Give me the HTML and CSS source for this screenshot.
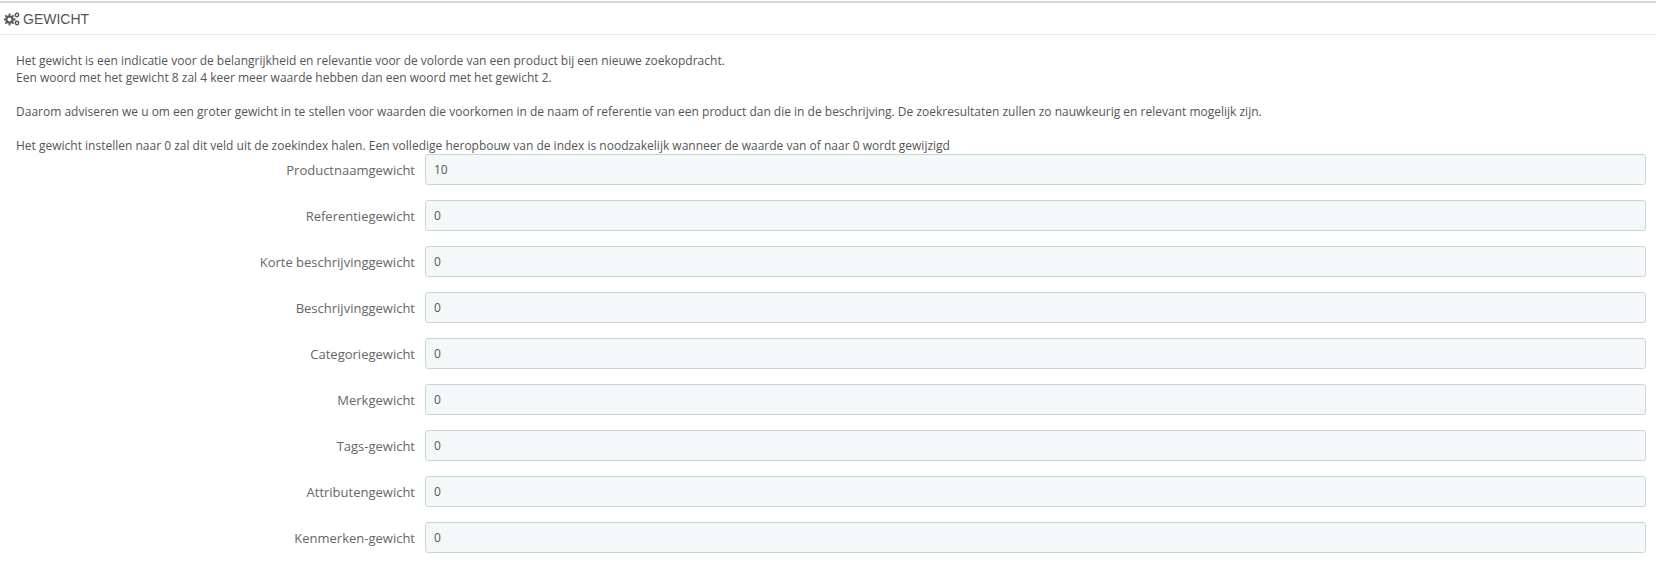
FILE: index.html
```html
<!DOCTYPE html>
<html lang="nl">
  <head>
    <meta charset="UTF-8" />
    <meta name="viewport" content="width=device-width, initial-scale=1.0" />
    <title>Gewicht</title>
    <link rel="stylesheet" href="styles.css">
  </head>
  <body>
    <section class="panel">
      <h3 class="panel-heading">
        <svg class="panel-icon" viewBox="0 0 16 14" width="16" height="14" aria-hidden="true">
          <g fill="none" stroke="#555">
            <circle cx="5.5" cy="7.5" r="3.2" stroke-width="2.2" />
            <path d="M5.5 1.5v2M5.5 11.5v2M-.5 7.5h2M9.5 7.5h2M1.3 3.3l1.4 1.4M8.3 10.3l1.4 1.4M1.3 11.7l1.4-1.4M8.3 4.700l1.4-1.4" stroke-width="1.8" />
            <circle cx="13" cy="3" r="1.700" stroke-width="1.400" />
            <circle cx="13" cy="11" r="1.700" stroke-width="1.400" />
          </g>
        </svg>
        Gewicht
      </h3>

      <div class="intro">
        <p>Het gewicht is een indicatie voor de belangrijkheid en relevantie voor de volorde van een product bij een nieuwe zoekopdracht.<br>Een woord met het gewicht 8 zal 4 keer meer waarde hebben dan een woord met het gewicht 2.</p>
        <p>Daarom adviseren we u om een groter gewicht in te stellen voor waarden die voorkomen in de naam of referentie van een product dan die in de beschrijving. De zoekresultaten zullen zo nauwkeurig en relevant mogelijk zijn.</p>
        <p>Het gewicht instellen naar 0 zal dit veld uit de zoekindex halen. Een volledige heropbouw van de index is noodzakelijk wanneer de waarde van of naar 0 wordt gewijzigd</p>
      </div>

      <form class="weights">
        <div class="form-row"><label for="w1">Productnaamgewicht</label><input id="w1" type="text" value="10"></div>
        <div class="form-row"><label for="w2">Referentiegewicht</label><input id="w2" type="text" value="0"></div>
        <div class="form-row"><label for="w3">Korte beschrijvinggewicht</label><input id="w3" type="text" value="0"></div>
        <div class="form-row"><label for="w4">Beschrijvinggewicht</label><input id="w4" type="text" value="0"></div>
        <div class="form-row"><label for="w5">Categoriegewicht</label><input id="w5" type="text" value="0"></div>
        <div class="form-row"><label for="w6">Merkgewicht</label><input id="w6" type="text" value="0"></div>
        <div class="form-row"><label for="w7">Tags-gewicht</label><input id="w7" type="text" value="0"></div>
        <div class="form-row"><label for="w8">Attributengewicht</label><input id="w8" type="text" value="0"></div>
        <div class="form-row"><label for="w9">Kenmerken-gewicht</label><input id="w9" type="text" value="0"></div>
      </form>
    </section>
  </body>
</html>
```

FILE: styles.css
```css
* {
  margin: 0;
  padding: 0;
  box-sizing: border-box;
}

body {
  background-color: white;
  font-family: "Open Sans", sans-serif;
  font-size: 12px;
  color: #555;
}

.panel {
  border-top: 2px solid #d3d8db;
  margin-top: 1px;
}

.panel-heading {
  display: flex;
  align-items: center;
  gap: 3px;
  height: 32px;
  padding-left: 4px;
  border-bottom: 1px solid #eee;
  font-family: "Liberation Sans Narrow", "Liberation Sans", sans-serif;
  font-size: 14px;
  font-weight: normal;
  text-transform: uppercase;
}

.panel-icon {
  flex-shrink: 0;
}

.intro {
  padding: 17px 16px 0;
  line-height: 17px;
}

.intro p {
  margin-bottom: 17px;
}

.intro p:last-child {
  margin-bottom: 0;
}

.weights {
  display: flex;
  flex-direction: column;
  gap: 15px;
  margin-top: 0;
}

.form-row {
  display: flex;
  align-items: center;
  gap: 10px;
  padding-right: 10px;
}

.form-row label {
  width: 415px;
  text-align: right;
  font-size: 13px;
  color: #666;
}

.form-row input {
  flex: 1;
  height: 31px;
  padding: 0 8px;
  background-color: #f5f8f9;
  border: 1px solid #c7d6db;
  border-radius: 3px;
  font-family: "Open Sans", sans-serif;
  font-size: 12px;
  color: #555;
}
```
